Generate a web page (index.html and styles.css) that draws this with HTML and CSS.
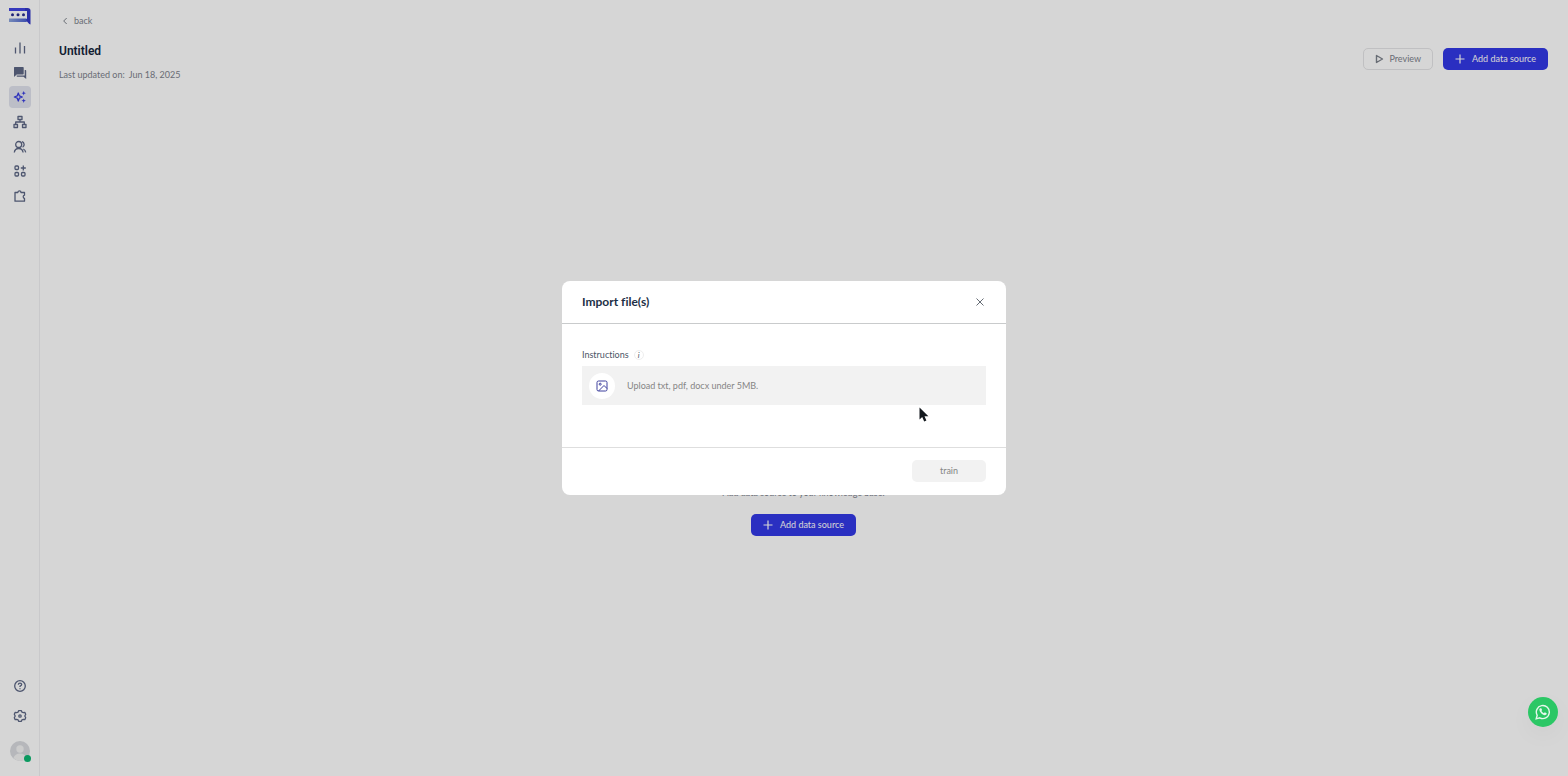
FILE: index.html
```html
<!DOCTYPE html>
<html lang="en">
<head>
<meta charset="utf-8">
<title>Untitled</title>
<link rel="stylesheet" href="styles.css">
</head>
<body>
<div class="app">
  <aside class="sidebar">
    <a class="logo" href="#" aria-label="Home">
      <svg width="23" height="18" viewBox="0 0 23 18"><defs><linearGradient id="lg" x1="0" y1="0" x2="1" y2="0"><stop offset="0" stop-color="#8ea6dc"/><stop offset="1" stop-color="#4a5fd0"/></linearGradient></defs><path d="M1 1h18.500q3 0 3 2.500V17.500q-1.500-.3-3.500-3H1v-2.500h18V4H1z" fill="#3439c8"/><path d="M1 11.500h17.500v3.500H1z" fill="url(#lg)"/><path d="M1 1h16v3H1z" fill="#4145e0"/><g fill="#282d91"><circle cx="4.500" cy="7.800" r="1.500"/><circle cx="10" cy="7.800" r="1.500"/><circle cx="15.500" cy="7.800" r="1.500"/></g></svg>
    </a>
    <nav class="nav" aria-label="Main">
      <a class="nav-item" href="#" aria-label="Analytics"><svg class="icon" viewBox="0 0 14 14"><path d="M2.500 6.500v6M7 1.500v11M11.500 5v7.500"/></svg></a>
      <a class="nav-item" href="#" aria-label="Chats"><svg class="icon solid" viewBox="0 0 14 14"><path d="M1.500 1h8.500q.7 0 .7.700v6q0 .7-.7.700H3.700L1 11V1.700Q1 1 1.500 1z"/><path d="M11.700 4h.8q.7 0 .7.700V13L10.500 10.800H4.300q-.7 0-.7-.7v-.6h8.100z"/></svg></a>
      <a class="nav-item active" href="#" aria-label="Knowledge"><svg class="icon" viewBox="0 0 14 14"><path d="M5.300 3l1.100 2.900L9.300 7 6.400 8.100 5.300 11 4.200 8.100 1.300 7l2.900-1.100z"/><path class="fill" d="M10.700 1l.6 1.600 1.600.6-1.600.6-.6 1.600-.6-1.600-1.600-.6 1.600-.6zM10.700 8.500l.6 1.600 1.600.6-1.600.6-.6 1.600-.6-1.600-1.600-.6 1.600-.6z"/></svg></a>
      <a class="nav-item" href="#" aria-label="Flows"><svg class="icon" viewBox="0 0 14 14"><path d="M5 1.500h4v3H5zM1 9.500h3.500v3H1zM9.500 9.500H13v3H9.500zM7 4.500V7M2.700 9.500V7h8.600v2.500"/></svg></a>
      <a class="nav-item" href="#" aria-label="Contacts"><svg class="icon" viewBox="0 0 14 14"><circle cx="5.700" cy="4.500" r="3"/><path d="M1.300 12.500q.5-4 4.400-4t4.400 4M9 1.700a3 3 0 0 1 .6 5.500M10.300 9q2 .8 2.400 3.300"/></svg></a>
      <a class="nav-item" href="#" aria-label="Apps"><svg class="icon" viewBox="0 0 14 14"><rect x="2" y="2" width="3.500" height="3.500" rx="1"/><rect x="2" y="8.500" width="3.500" height="3.500" rx="1"/><rect x="8.500" y="8.500" width="3.500" height="3.500" rx="1"/><path d="M10.300 1.500v5M7.800 4h5"/></svg></a>
      <a class="nav-item" href="#" aria-label="Integrations"><svg class="icon" viewBox="0 0 14 14"><path d="M2 3.500h2.800a1.600 1.600 0 0 1 3.200 0h3.500v2.700a1.700 1.700 0 0 0 0 3.300v2.700H2V3.500z"/></svg></a>
    </nav>
    <div class="sidebar-foot">
      <a class="nav-item" href="#" aria-label="Help"><svg class="icon" viewBox="0 0 14 14"><circle cx="7" cy="7" r="5.300"/><path d="M5.300 5.700q.1-1.500 1.700-1.500t1.700 1.400Q8.700 6.700 7 7.200V8M7 9.200v1"/></svg></a>
      <a class="nav-item" href="#" aria-label="Settings"><svg class="icon" viewBox="0 0 14 14"><path d="M5.600 1.700h2.800l.5 1.400 1.500.5 1.400-.3.900 2-.9 1.700.9 1.700-.9 2-1.400-.3-1.500.5-.5 1.400H5.600l-.5-1.400-1.500-.5-1.400.3-.9-2L2.200 7l-.9-1.700.9-2 1.400.3 1.500-.5z"/><circle cx="7" cy="7" r="1.200"/></svg></a>
      <button class="avatar" type="button" aria-label="Account"><svg width="20" height="20" viewBox="0 0 20 20"><circle cx="10" cy="10" r="10" fill="#d9dbdf"/><circle cx="10" cy="8" r="3.700" fill="#f3f3f4"/><path d="M3.500 17q1.500-4.500 6.500-4.500t6.500 4.500Q13.500 20 10 20t-6.500-3z" fill="#f3f3f4"/></svg><span class="status"></span></button>
    </div>
  </aside>
  <main class="main">
    <a class="back" href="#"><svg width="6" height="8" viewBox="0 0 6 8"><path d="M4.700 1L1.700 4l3 3"/></svg>back</a>
    <header class="page-head">
      <div>
        <h1>Untitled</h1>
        <p class="updated"><span>Last updated on:</span><span>Jun 18, 2025</span></p>
      </div>
      <div class="actions">
        <button class="btn outline" type="button"><svg width="9" height="10" viewBox="0 0 9 10"><path d="M1.500 1.500L7.500 5l-6 3.500z"/></svg>Preview</button>
        <button class="btn primary" type="button"><svg width="10" height="10" viewBox="0 0 10 10"><path d="M5 .5v9M.5 5h9"/></svg>Add data source</button>
      </div>
    </header>
    <section class="empty">
      <p>Add data source to your knowledge base.</p>
      <button class="btn primary" type="button"><svg width="10" height="10" viewBox="0 0 10 10"><path d="M5 .5v9M.5 5h9"/></svg>Add data source</button>
    </section>
  </main>
</div>
<div class="overlay">
  <div class="modal" role="dialog" aria-modal="true" aria-labelledby="modal-title">
    <header class="modal-head">
      <h2 id="modal-title">Import file(s)</h2>
      <button class="close" type="button" aria-label="Close"><svg width="8" height="8" viewBox="0 0 8 8"><path d="M.5.500l7 7M7.500.500l-7 7"/></svg></button>
    </header>
    <div class="modal-body">
      <div class="label">Instructions <span class="info">i</span></div>
      <button class="upload" type="button">
        <span class="upload-icon"><svg width="12" height="12" viewBox="0 0 12 12"><rect x="1" y="1" width="10" height="10" rx="1.500"/><circle cx="4.200" cy="4.200" r="1"/><path d="M2.500 11L8 5.500l3 3"/></svg></span>
        Upload txt, pdf, docx under 5MB.
      </button>
    </div>
    <footer class="modal-foot"><button class="train" type="button" disabled>train</button></footer>
  </div>
</div>
<a class="whatsapp" href="#" aria-label="WhatsApp"><svg width="16" height="16" viewBox="0 0 16 16"><path d="M1.200 14.800l1-3.500A6.500 6.500 0 1 1 4.800 13.800z" fill="none" stroke="#e8f7ed" stroke-width="1.400"/><path d="M5.300 4.200h1l.8 1.900-.7.900q.8 1.600 2.500 2.300l.9-1 1.900.9q.1 1.500-1.300 1.900-1.800.4-4-1.700T4.300 5.500q.2-1 1-1.300z" fill="#e8f7ed"/></svg></a>
<svg class="cursor" width="10" height="15" viewBox="0 0 10 15"><path d="M.5.500v12l2.700-2.400 2 4.400 2.200-1-1.900-4.200h3.900z" fill="#14191e"/></svg>
</body>
</html>
```

FILE: styles.css
```css
* { box-sizing: border-box; }
body { margin: 0; font-family: Lato, sans-serif; font-size: 9px; line-height: 12px; color: #7d828c; background: #fff; font-variant-ligatures: none; }
h1, h2, p { margin: 0; }
button { font: inherit; cursor: pointer; }
a { color: inherit; text-decoration: none; }
svg { display: block; flex: none; fill: none; stroke: currentColor; }

.app { display: flex; min-height: 100vh; }
.sidebar { display: flex; flex-direction: column; align-items: center; width: 40px; padding: 7px 0 15px; border-right: 1px solid #f0f0f2; }
.logo svg { stroke: none; }
.nav { display: flex; flex-direction: column; justify-content: space-between; height: 170px; margin-top: 12px; }
.nav-item { display: grid; place-items: center; width: 22px; height: 22px; border-radius: 4px; color: #5d6785; }
.active { color: #373ce0; background: #e1e3ee; }
.icon { width: 14px; height: 14px; stroke-width: 1.3; stroke-linejoin: round; }
.solid { fill: currentColor; stroke: none; }
.fill { fill: currentColor; stroke: none; }
.sidebar-foot { display: flex; flex-direction: column; align-items: center; gap: 8px; margin-top: auto; }
.avatar { position: relative; margin-top: 6px; padding: 0; border: 0; background: none; }
.avatar svg { stroke: none; }
.status { position: absolute; right: -1px; bottom: -1px; width: 7px; height: 7px; border-radius: 50%; background: #0db772; }

.main { display: flex; flex: 1; flex-direction: column; padding: 15px 20px 0 19px; }
.back { display: flex; align-items: center; align-self: flex-start; gap: 6px; margin-left: 3px; }
.page-head { display: flex; justify-content: space-between; align-items: center; margin-top: 9px; }
h1 { font-family: Roboto, sans-serif; font-size: 12px; line-height: 30px; font-weight: 600; color: #16263c; }
.updated { display: flex; gap: 4px; margin-top: 3px; }
.actions { display: flex; gap: 10px; }
.btn { display: flex; align-items: center; justify-content: center; gap: 7px; height: 22px; padding: 0 11px; border: 1px solid transparent; border-radius: 5px; }
.outline { gap: 5px; border-color: #e5e5e7; background: none; color: #7d828c; }
.outline svg { stroke-width: 1.4; stroke-linejoin: round; }
.primary { background: #3338e6; color: #fff; }
.primary svg { stroke-width: 1.2; }
.empty { display: flex; flex: 1; flex-direction: column; align-items: center; justify-content: center; gap: 15px; padding-top: 165px; }

.overlay { position: fixed; inset: 0; display: grid; place-items: center; background: rgba(0, 0, 0, .16); }
.modal { width: 444px; max-width: 90%; border-radius: 8px; background: #fff; }
.modal-head { display: flex; align-items: center; justify-content: space-between; height: 43px; padding: 0 22px 0 20px; border-bottom: 1px solid #c9cbcc; }
h2 { font-size: 12px; line-height: 16px; font-weight: 700; color: #1d3046; }
.close { padding: 0; border: 0; background: none; color: #666c75; }
.modal-body { padding: 25px 20px 42px; }
.label { display: flex; align-items: center; gap: 5px; color: #4c5666; }
.info { display: grid; place-items: center; width: 10px; height: 10px; border: 1px solid #eee; border-radius: 50%; font-size: 8px; line-height: 8px; font-style: italic; }
.upload { display: flex; align-items: center; gap: 12px; width: 100%; height: 39px; margin-top: 5px; padding: 0 7px; border: 0; background: #f2f2f2; color: #858585; text-align: left; }
.upload-icon { display: grid; place-items: center; width: 26px; height: 26px; border-radius: 50%; background: #fff; color: #3e409e; }
.modal-foot { display: flex; justify-content: flex-end; height: 48px; padding: 12px 20px; border-top: 1px solid #dedede; }
.train { width: 74px; height: 22px; border: 0; border-radius: 5px; background: #f2f2f2; color: #858585; }

.whatsapp { position: fixed; right: 10px; bottom: 49px; display: grid; place-items: center; width: 30px; height: 30px; border-radius: 50%; background: #2bc765; box-shadow: 0 8px 24px rgba(0, 0, 0, .04); }
.whatsapp svg { stroke: none; }
.cursor { position: fixed; left: 919px; top: 407px; stroke: none; }
```
